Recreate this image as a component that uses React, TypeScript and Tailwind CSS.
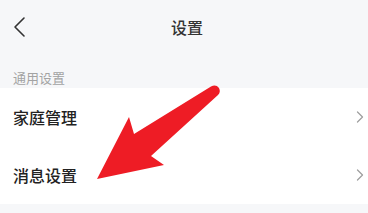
const rows = ["家庭管理", "消息设置"];

export default function App() {
  return (
    <div
      className="relative h-[213px] w-[368px] overflow-hidden bg-[#f6f7f9]"
      style={{ fontFamily: '"Noto Sans CJK SC", "Noto Sans", sans-serif' }}
    >
      <header className="relative flex h-[54px] items-center justify-center pl-[6px]">
        <button className="absolute left-[11px] top-[16px] flex h-[22px] w-[16px] items-center justify-center">
          <svg width="14" height="22" viewBox="0 0 14 22" fill="none">
            <path d="M12 2 L3 11 L12 20" stroke="#333" strokeWidth="1.6" strokeLinecap="round" strokeLinejoin="round" />
          </svg>
        </button>
        <h1 className="text-[16px] font-medium text-[#333]">设置</h1>
      </header>

      <div className="flex h-[34px] items-end px-[13px] pb-[1px] text-[13px] text-[#a3a3a3]">通用设置</div>

      <ul className="bg-white">
        {rows.map((label) => (
          <li key={label} className="flex h-[58px] items-center justify-between pl-[13px] pr-[4px]">
            <span className="text-[16px] font-medium text-[#222]">{label}</span>
            <svg width="8" height="12" viewBox="0 0 8 12" fill="none">
              <path d="M1.5 1 L6.5 6 L1.5 11" stroke="#a0a0a0" strokeWidth="1.3" strokeLinecap="round" strokeLinejoin="round" />
            </svg>
          </li>
        ))}
      </ul>

      <svg className="pointer-events-none absolute left-0 top-0" width="368" height="213" viewBox="0 0 368 213">
        <path
          d="M97 179 L129 117 L134 134 L211 86.5 Q216 84 219 88 Q221 92 218 95 L151 156 L164 165 Z"
          fill="#ee1c25"
        />
      </svg>
    </div>
  );
}
